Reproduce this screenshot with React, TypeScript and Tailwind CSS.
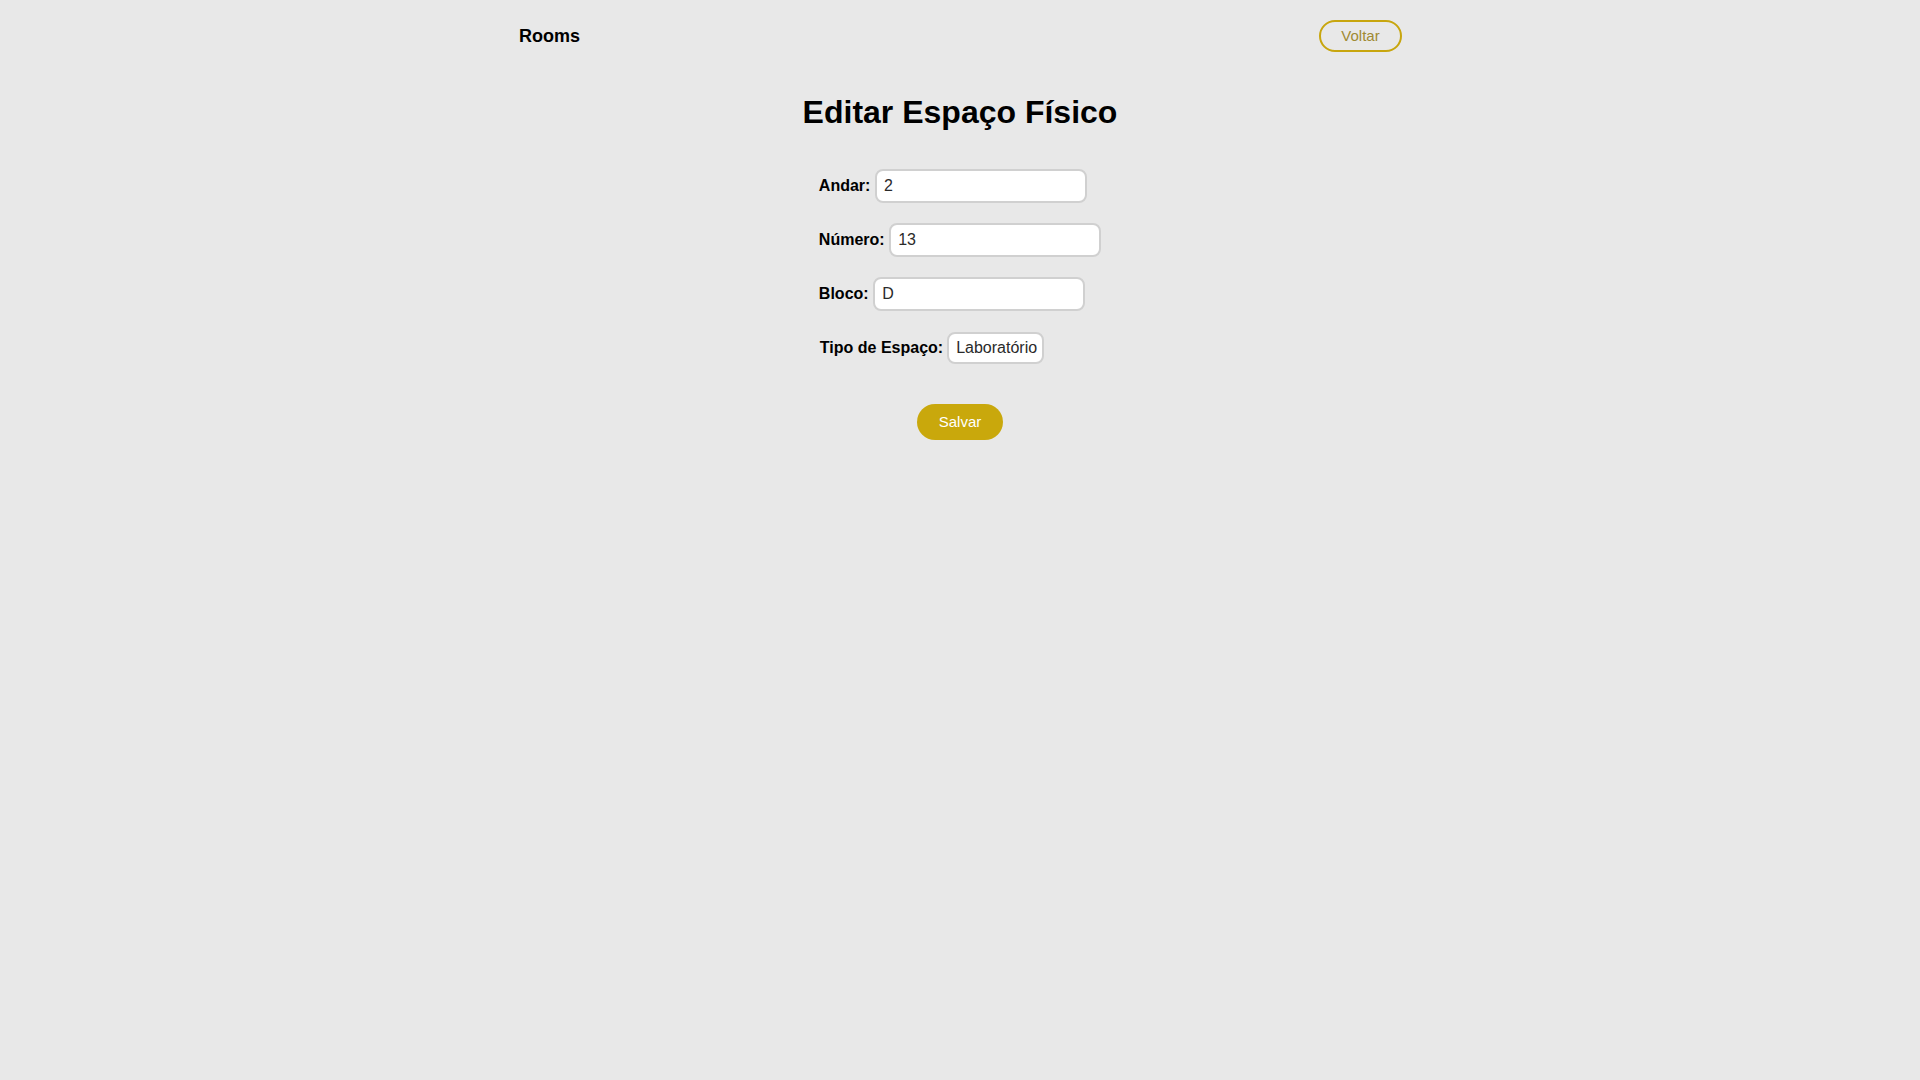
import React from "react";

const fieldCls =
  "h-[34px] w-[212px] rounded-[8px] border-2 border-[#d0d0d0] bg-white px-[7px] text-[16px] text-[#2a2a2a] outline-none";

export default function App() {
  return (
    <div
      className="min-h-[1080px] w-full bg-[#e8e8e8] text-black"
      style={{ fontFamily: '"Liberation Sans", Arial, sans-serif' }}
    >
      <header className="mx-auto flex h-[72px] w-[900px] items-center justify-between px-[9px] pr-[8px]">
        <span className="text-[18px] font-bold">Rooms</span>
        <button className="h-[32px] w-[83px] rounded-full border-2 border-[#c8a60e] text-[15px] text-[#9f8a33]">
          Voltar
        </button>
      </header>

      <h1 className="mt-[22px] text-center text-[32px] font-bold leading-[1.15]">
        Editar Espaço Físico
      </h1>

      <form
        className="mx-auto mt-[38px] flex w-fit flex-col items-start gap-[20px]"
        onSubmit={(e) => e.preventDefault()}
      >
        <div className="flex items-center gap-[4.5px]">
          <label className="text-[16px] font-bold">Andar:</label>
          <input className={fieldCls} defaultValue="2" />
        </div>
        <div className="flex items-center gap-[4.5px]">
          <label className="text-[16px] font-bold">Número:</label>
          <input className={fieldCls} defaultValue="13" />
        </div>
        <div className="flex items-center gap-[4.5px]">
          <label className="text-[16px] font-bold">Bloco:</label>
          <input className={fieldCls} defaultValue="D" />
        </div>
        <div className="flex h-[34px] items-center gap-[4px] pl-[1px]">
          <label className="text-[16px] font-bold">Tipo de Espaço:</label>
          <div className="flex h-[32px] w-[97px] items-center rounded-[8px] border-2 border-[#d0d0d0] bg-white pl-[7px] text-[16px] text-[#2a2a2a]">
            Laboratório
          </div>
        </div>
        <button
          type="submit"
          className="mt-[19px] h-[36px] w-[86px] self-center rounded-full bg-[#c9a80c] text-[15px] text-white"
        >
          Salvar
        </button>
      </form>
    </div>
  );
}
